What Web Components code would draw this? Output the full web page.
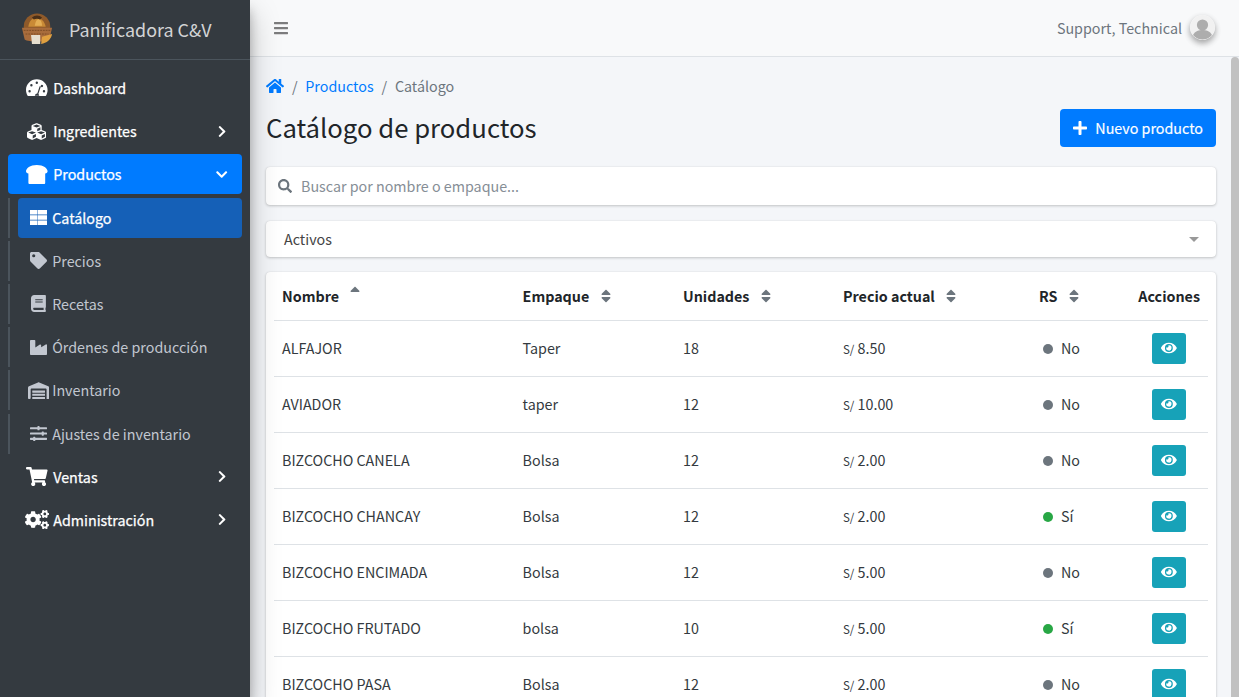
<!DOCTYPE html>
<html lang="es">
<head>
<meta charset="utf-8">
<title>Catálogo de productos</title>
<style>
  html, body { margin: 0; height: 100%; overflow: hidden; }
  body {
    font-family: "Noto Sans CJK SC", "Liberation Sans", sans-serif;
    font-size: 14.3px;
    line-height: 24px;
    color: #212529;
    background: #f4f6f9;
  }
</style>
</head>
<body>
<app-shell>
  <app-sidebar slot="sidebar">
    <nav-item icon="gauge" label="Dashboard"></nav-item>
    <nav-item icon="cubes" label="Ingredientes" caret="right"></nav-item>
    <nav-item icon="bread" label="Productos" caret="down" active></nav-item>
    <nav-item icon="list" label="Catálogo" sub current></nav-item>
    <nav-item icon="tag" label="Precios" sub></nav-item>
    <nav-item icon="book" label="Recetas" sub></nav-item>
    <nav-item icon="industry" label="Órdenes de producción" sub></nav-item>
    <nav-item icon="warehouse" label="Inventario" sub></nav-item>
    <nav-item icon="sliders" label="Ajustes de inventario" sub></nav-item>
    <nav-item icon="cart" label="Ventas" caret="right"></nav-item>
    <nav-item icon="cogs" label="Administración" caret="right"></nav-item>
  </app-sidebar>
  <app-navbar slot="navbar"></app-navbar>
  <page-head></page-head>
  <search-box></search-box>
  <status-select>Activos</status-select>
  <product-table></product-table>
</app-shell>

<script>
const icon = (w, d) => `<svg viewBox="0 0 ${w} 512" width="${w / 512}em" height="1em"><path fill="currentColor" d="${d}"/></svg>`;

const ICONS = {
  gauge: icon(576, "M288 32C129 32 0 161 0 320c0 53 14 102 39 144 6 10 16 16 28 16h442c12 0 22-6 28-16 25-42 39-91 39-144C576 161 447 32 288 32zm0 64a32 32 0 1 1 0 64 32 32 0 0 1 0-64zM96 384a32 32 0 1 1 0-64 32 32 0 0 1 0 64zm48-160a32 32 0 1 1 0-64 32 32 0 0 1 0 64zm247 18-61 184c14 12 22 30 22 50H236c0-36 29-64 64-64h1l61-184c3-8 12-13 20-10 9 3 13 12 10 20zm33 3a32 32 0 1 1 27-50 32 32 0 0 1-27 50zm56 139a32 32 0 1 1 0-64 32 32 0 0 1 0 64z"),
  cubes: icon(512, "M488.600 250.200L392 214V105.500c0-15-9.300-28.400-23.400-33.700l-100-37.500c-8.100-3.100-17.100-3.100-25.300 0l-100 37.500c-14.100 5.300-23.400 18.700-23.400 33.700V214l-96.600 36.200C9.300 255.500 0 268.900 0 283.900V394c0 13.600 7.700 26.100 19.900 32.200l100 50c10.100 5.100 22.100 5.100 32.200 0l103.900-52 103.900 52c10.100 5.100 22.100 5.100 32.200 0l100-50c12.200-6.100 19.900-18.600 19.900-32.200V283.900c0-15-9.300-28.400-23.400-33.700zM358 214.800l-85 31.900v-68.200l85-37v73.300zM154 104.100l102-38.200 102 38.200v.6l-102 41.400-102-41.400v-.6zm84 291.100l-85 42.500v-79.100l85-38.800v75.400zm0-112l-102 41.400-102-41.400v-.6l102-38.200 102 38.200v.6zm240 112l-85 42.500v-79.100l85-38.800v75.400zm0-112l-102 41.400-102-41.400v-.6l102-38.200 102 38.200v.6z"),
  bread: icon(576, "M288 0C108 0 0 93.400 0 169.140 0 199.440 24.240 224 64 224v256c0 17.670 16.120 32 36 32h376c19.880 0 36-14.330 36-32V224c39.760 0 64-24.560 64-54.860C576 93.400 468 0 288 0z"),
  list: icon(512, "M0 32h212v133H0zM226 32h286v133H226zM0 187h212v138H0zM226 187h286v138H226zM0 347h212v133H0zM226 347h286v133H226z"),
  tag: icon(512, "M0 252V48C0 21 21 0 48 0h204c13 0 25 5 34 14l212 212c19 19 19 49 0 68L294 498c-19 19-49 19-68 0L14 286C5 277 0 265 0 252zm112-188a48 48 0 1 0 0 96 48 48 0 0 0 0-96z"),
  book: icon(448, "M448 360V24c0-13-11-24-24-24H96C43 0 0 43 0 96v320c0 53 43 96 96 96h328c13 0 24-11 24-24v-16c0-8-4-14-9-19-4-15-4-58 0-71 5-5 9-12 9-22zM128 134c0-3 3-6 6-6h212c3 0 6 3 6 6v20c0 3-3 6-6 6H134c-3 0-6-3-6-6zm0 64c0-3 3-6 6-6h212c3 0 6 3 6 6v20c0 3-3 6-6 6H134c-3 0-6-3-6-6zm253 250H96c-18 0-32-14-32-32s14-32 32-32h285c-2 17-2 47 0 64z"),
  industry: icon(512, "M475 163 336 252v-65c0-19-21-30-37-20l-139 89V56c0-13-11-24-24-24H24C11 32 0 43 0 56v400c0 13 11 24 24 24h464c13 0 24-11 24-24V183c0-19-21-30-37-20z"),
  warehouse: icon(640, "M640 173v315c0 13-11 24-24 24h-56V224c0-18-14-32-32-32H112c-18 0-32 14-32 32v264c0 13-11 24-24 24H24c-13 0-24-11-24-24V173c0-20 12-37 30-45L302 15c11-5 24-5 36 0l272 113c18 8 30 25 30 45zM504 256H136c-4 0-8 4-8 8v48c0 4 4 8 8 8h368c4 0 8-4 8-8v-48c0-4-4-8-8-8zm0 96H136c-4 0-8 4-8 8v48c0 4 4 8 8 8h368c4 0 8-4 8-8v-48c0-4-4-8-8-8zm0 96H136c-4 0-8 4-8 8v48c0 4 4 8 8 8h368c4 0 8-4 8-8v-48c0-4-4-8-8-8z"),
  sliders: icon(512, "M496 384H160v-16c0-9-7-16-16-16h-32c-9 0-16 7-16 16v16H16c-9 0-16 7-16 16v32c0 9 7 16 16 16h80v16c0 9 7 16 16 16h32c9 0 16-7 16-16v-16h336c9 0 16-7 16-16v-32c0-9-7-16-16-16zm0-160h-80v-16c0-9-7-16-16-16h-32c-9 0-16 7-16 16v16H16c-9 0-16 7-16 16v32c0 9 7 16 16 16h336v16c0 9 7 16 16 16h32c9 0 16-7 16-16v-16h80c9 0 16-7 16-16v-32c0-9-7-16-16-16zm0-160H288V48c0-9-7-16-16-16h-32c-9 0-16 7-16 16v16H16C7 64 0 71 0 80v32c0 9 7 16 16 16h208v16c0 9 7 16 16 16h32c9 0 16-7 16-16v-16h208c9 0 16-7 16-16V80c0-9-7-16-16-16z"),
  cart: icon(576, "M528 301l47-208c4-15-8-29-23-29H159l-9-45C147 8 137 0 126 0H24C11 0 0 11 0 24v16c0 13 11 24 24 24h70l70 343c-17 10-28 28-28 49 0 31 25 56 56 56s56-25 56-56c0-16-6-30-17-40h210c-11 10-17 24-17 40 0 31 25 56 56 56s56-25 56-56c0-22-13-41-31-50l6-24c3-15-8-29-23-29H220l-7-32h292c11 0 21-8 23-19z"),
  cogs: icon(640, "M512.100 191l-8.200 14.300c-3 5.300-9.400 7.500-15.100 5.400-11.800-4.400-22.600-10.700-32.100-18.600-4.600-3.800-5.800-10.500-2.800-15.700l8.200-14.300c-6.900-8-12.300-17.300-15.900-27.400h-16.500c-6 0-11.200-4.300-12.200-10.300-2-12-2.100-24.600 0-37.100 1-6 6.200-10.400 12.200-10.400h16.500c3.600-10.100 9-19.400 15.900-27.400l-8.200-14.300c-3-5.200-1.900-11.900 2.800-15.700 9.500-7.900 20.400-14.200 32.100-18.600 5.700-2.100 12.100.1 15.100 5.400l8.200 14.300c10.500-1.900 21.200-1.900 31.700 0L552 6.300c3-5.300 9.400-7.500 15.100-5.400 11.800 4.400 22.600 10.700 32.100 18.600 4.600 3.800 5.800 10.500 2.800 15.700l-8.200 14.300c6.900 8 12.300 17.300 15.900 27.400h16.500c6 0 11.200 4.300 12.200 10.300 2 12 2.100 24.600 0 37.100-1 6-6.200 10.400-12.200 10.400h-16.500c-3.600 10.100-9 19.400-15.900 27.400l8.200 14.300c3 5.200 1.900 11.900-2.800 15.700-9.500 7.900-20.400 14.200-32.100 18.600-5.700 2.100-12.100-.1-15.100-5.400l-8.200-14.300c-10.400 1.900-21.200 1.900-31.700 0zm-10.500-58.800c38.500 29.600 82.400-14.300 52.800-52.800-38.500-29.700-82.400 14.300-52.800 52.800zM386.300 286.100l33.700 16.800c10.100 5.800 14.500 18.100 10.500 29.100-8.900 24.200-26.400 46.400-42.600 65.800-7.400 8.900-20.200 11.100-30.300 5.300l-29.100-16.800c-16 13.700-34.600 24.600-54.900 31.700v33.600c0 11.600-8.300 21.600-19.700 23.600-24.600 4.200-50.400 4.400-75.900 0-11.500-2-20-11.900-20-23.600V418c-20.300-7.200-38.900-18-54.900-31.700L74 403c-10 5.800-22.900 3.600-30.300-5.300-16.200-19.400-33.300-41.600-42.200-65.700-4-10.900.4-23.200 10.500-29.100l33.300-16.800c-3.900-20.900-3.900-42.400 0-63.400L12 205.800c-10.100-5.800-14.600-18.100-10.500-29 8.900-24.200 26-46.400 42.200-65.800 7.400-8.900 20.200-11.100 30.300-5.300l29.100 16.800c16-13.700 34.600-24.600 54.900-31.700V57.100c0-11.500 8.200-21.500 19.600-23.500 24.600-4.200 50.500-4.400 76-.1 11.500 2 20 11.900 20 23.600v33.600c20.300 7.200 38.900 18 54.900 31.700l29.100-16.800c10-5.800 22.900-3.600 30.300 5.300 16.200 19.400 33.200 41.600 42.100 65.800 4 10.900.1 23.200-10 29.100l-33.700 16.800c3.900 21 3.900 42.500 0 63.500zm-117.600 21.100c59.200-77-28.700-164.900-105.700-105.700-59.200 77 28.700 164.900 105.700 105.700zm243.400 182.700l-8.200 14.300c-3 5.300-9.400 7.500-15.100 5.400-11.800-4.400-22.600-10.700-32.100-18.600-4.600-3.800-5.800-10.500-2.800-15.700l8.200-14.300c-6.900-8-12.300-17.300-15.900-27.400h-16.500c-6 0-11.200-4.300-12.200-10.300-2-12-2.100-24.600 0-37.100 1-6 6.200-10.400 12.200-10.400h16.500c3.600-10.100 9-19.400 15.900-27.400l-8.200-14.300c-3-5.200-1.900-11.900 2.800-15.700 9.500-7.900 20.400-14.200 32.100-18.600 5.700-2.100 12.100.1 15.100 5.400l8.200 14.300c10.500-1.900 21.200-1.900 31.700 0l8.200-14.300c3-5.300 9.400-7.500 15.100-5.400 11.800 4.400 22.600 10.700 32.100 18.600 4.600 3.800 5.800 10.500 2.800 15.700l-8.200 14.300c6.900 8 12.300 17.300 15.900 27.400h16.500c6 0 11.200 4.300 12.200 10.300 2 12 2.100 24.600 0 37.100-1 6-6.200 10.400-12.200 10.400h-16.500c-3.600 10.100-9 19.400-15.900 27.400l8.200 14.300c3 5.200 1.900 11.900-2.800 15.700-9.500 7.900-20.400 14.200-32.100 18.600-5.700 2.100-12.100-.1-15.100-5.400l-8.200-14.300c-10.400 1.900-21.200 1.900-31.700 0zM501.600 431c38.500 29.600 82.400-14.300 52.800-52.800-38.500-29.600-82.400 14.300-52.800 52.800z"),
  chevRight: icon(320, "M285 273 91 467c-9 9-25 9-34 0l-23-23c-9-9-9-24 0-34l154-154L34 102c-9-10-9-25 0-34l23-23c9-9 25-9 34 0l194 194c10 9 10 25 0 34z"),
  chevDown: icon(448, "M207 381 13 187c-9-9-9-25 0-34l23-23c9-9 24-9 34 0l154 154 154-154c10-9 25-9 34 0l23 23c9 9 9 25 0 34L241 381c-9 10-25 10-34 0z"),
  home: icon(576, "M280 148 96 300v164c0 9 7 16 16 16l112-1c9 0 16-7 16-16v-95c0-9 7-16 16-16h64c9 0 16 7 16 16v95c0 9 7 16 16 16l112 1c9 0 16-7 16-16V300L296 148c-5-4-11-4-16 0zm292 103-84-69V44c0-7-5-12-12-12h-56c-7 0-12 5-12 12v73l-89-74c-18-14-44-14-62 0L4 251c-5 4-6 12-2 17l26 31c4 5 12 6 17 2L280 107c5-4 11-4 16 0l235 194c5 4 13 3 17-2l26-31c4-5 3-13-2-17z"),
  bars: icon(448, "M16 132h416c9 0 16-7 16-16V76c0-9-7-16-16-16H16C7 60 0 67 0 76v40c0 9 7 16 16 16zm0 160h416c9 0 16-7 16-16v-40c0-9-7-16-16-16H16c-9 0-16 7-16 16v40c0 9 7 16 16 16zm0 160h416c9 0 16-7 16-16v-40c0-9-7-16-16-16H16c-9 0-16 7-16 16v40c0 9 7 16 16 16z"),
  plus: icon(448, "M416 208H272V64c0-18-14-32-32-32h-32c-18 0-32 14-32 32v144H32c-18 0-32 14-32 32v32c0 18 14 32 32 32h144v144c0 18 14 32 32 32h32c18 0 32-14 32-32V304h144c18 0 32-14 32-32v-32c0-18-14-32-32-32z"),
  search: icon(512, "M505 443 405 343c-4-4-10-7-17-7h-16c28-35 44-80 44-128C416 93 323 0 208 0S0 93 0 208s93 208 208 208c48 0 93-16 128-44v16c0 7 3 13 7 17l100 100c9 9 24 9 34 0l28-28c9-10 9-25 0-34zM208 336a128 128 0 1 1 0-256 128 128 0 0 1 0 256z"),
  eye: icon(576, "M572 241C518 135 410 64 288 64S58 135 3 241a32 32 0 0 0 0 30c55 106 163 177 285 177s230-71 285-177a32 32 0 0 0-1-30zM288 400a144 144 0 1 1 0-288 144 144 0 0 1 0 288zm0-240a95 95 0 0 0-25 4 48 48 0 0 1-67 67 96 96 0 1 0 92-71z"),
  sortBoth: icon(320, "M41 288h238c21 0 32 26 17 41L177 448c-9 9-25 9-34 0L24 329c-15-15-4-41 17-41zm255-105L177 64c-9-9-25-9-34 0L24 183c-15 15-4 41 17 41h238c21 0 32-26 17-41z"),
  sortUp: icon(320, "M279 224H41c-21 0-32-26-17-41L143 64c9-9 25-9 34 0l119 119c15 15 4 41-17 41z")
};

class AppShell extends HTMLElement {
  constructor() {
    super();
    this.attachShadow({ mode: "open" }).innerHTML = `
      <style>
        :host { display: grid; grid-template-columns: 250px 1fr; height: 697px; }
        .side { position: relative; z-index: 2; box-shadow: 0 14px 28px rgba(0,0,0,.25), 0 10px 10px rgba(0,0,0,.22); display: flex; }
        .right { position: relative; display: flex; flex-direction: column; min-width: 0; height: 697px; }
        main { flex: 1; overflow: hidden; padding: 17px 23px 0 16px; min-height: 0; display: flex; flex-direction: column; }
        .thumb { position: absolute; right: 0; top: 57px; bottom: 0; width: 8px; background: #c1c1c1; border-radius: 4px 4px 0 0; }
      </style>
      <div class="side"><slot name="sidebar"></slot></div>
      <div class="right">
        <slot name="navbar"></slot>
        <main><slot></slot></main>
        <div class="thumb"></div>
      </div>`;
  }
}

class AppSidebar extends HTMLElement {
  constructor() {
    super();
    this.attachShadow({ mode: "open" }).innerHTML = `
      <style>
        :host { display: block; width: 250px; background: #343a40; }
        .brand { display: flex; align-items: center; height: 60px; border-bottom: 1px solid #4b545c; padding-left: 21px; box-sizing: border-box; }
        .brand svg { width: 32px; height: 32px; flex: none; margin-top: -1px; }
        .brand span { margin: -2px 0 0 16px; font-size: 17.9px; line-height: 30px; color: rgba(255,255,255,.8); }
        nav { display: flex; flex-direction: column; padding: 8px 8px 0; }
      </style>
      <div class="brand">
        <svg viewBox="0 0 35 35">
          <circle cx="17.5" cy="15" r="14.500" fill="#8f5a2a"/>
          <path d="M8 15c1-7 5-10 9-10s9 4 10 10z" fill="#c98a36"/>
          <path d="M15 14c1-6 3-8 5-7s3 3 3 7z" fill="#e3ae55"/>
          <path d="M12 5c3-3 8-3 11 0l-2 2c-2-1-5-1-7 0z" fill="#4a2f18"/>
          <path d="M1 16h33l-3 13c-3 3-23 3-27 0z" fill="#a86c3c"/>
          <path d="M3 19h29M5 23h25" stroke="#7b4a24" stroke-width="1" stroke-dasharray="2 1"/>
          <path d="M11 24h10v10H12z" fill="#e7dfcf"/>
          <path d="M23 26l11-3c-1 6-6 10-12 11z" fill="#e0a040"/>
        </svg>
        <span>Panificadora C&amp;V</span>
      </div>
      <nav><slot></slot></nav>`;
  }
}

class NavItem extends HTMLElement {
  constructor() {
    super();
    const caret = this.getAttribute("caret");
    const chev = caret ? `<i class="caret">${caret === "down" ? ICONS.chevDown : ICONS.chevRight}</i>` : "";
    this.attachShadow({ mode: "open" }).innerHTML = `
      <style>
        :host { display: block; position: relative; margin-bottom: 3.2px; }
        a { display: flex; align-items: center; height: 40px; border-radius: 4px; padding: 0 14px 0 16px; box-sizing: border-box; color: #fff; -webkit-text-stroke: .25px currentColor; }
        .ico { width: 25.6px; height: 24px; display: flex; align-items: center; justify-content: center; flex: none; margin-right: 3.600px; font-size: 19.2px; }
        .ico svg { flex: none; }
        span { white-space: nowrap; }
        .caret { margin-left: auto; width: 12px; display: flex; justify-content: center; font-size: 13px; }
        :host([active]) a { background: #007bff; }
        :host([sub]) { margin-left: 10px; }
        :host([sub]) a { color: #c2c7d0; padding-left: 8px; -webkit-text-stroke: 0; }
        :host([sub]) .ico { font-size: 17px; margin-right: .6px; }
        :host([sub])::before { content: ""; position: absolute; left: -10px; top: 0; bottom: 0; width: 2px; background: #4b545c; }
        :host([current]) a { background: #1560b7; color: #fff; -webkit-text-stroke: .25px currentColor; }
      </style>
      <a><i class="ico">${ICONS[this.getAttribute("icon")]}</i><span>${this.getAttribute("label")}</span>${chev}</a>`;
  }
}

class AppNavbar extends HTMLElement {
  constructor() {
    super();
    this.attachShadow({ mode: "open" }).innerHTML = `
      <style>
        :host { display: flex; align-items: center; justify-content: space-between; flex: none; height: 57px; box-sizing: border-box; background: #f8f9fa; border-bottom: 1px solid #dee2e6; padding: 0 24px; color: #6c757d; }
        .bars { color: rgba(0,0,0,.5); display: flex; font-size: 16px; }
        .user { display: flex; align-items: center; gap: 8px; }
        .avatar { width: 25px; height: 25px; border-radius: 50%; box-shadow: 0 3px 6px rgba(0,0,0,.16), 0 3px 6px rgba(0,0,0,.23); display: block; margin-top: -2px; }
      </style>
      <i class="bars">${ICONS.bars}</i>
      <div class="user"><span>Support, Technical</span>
        <svg class="avatar" viewBox="0 0 25 25">
          <circle cx="12.5" cy="12.5" r="12.5" fill="#f1f1f1"/>
          <circle cx="12.5" cy="10" r="5.6" fill="#adadad"/>
          <path d="M3 20c2-4 6-5 9.500-5s7.500 1 9.500 5c-5 6-14 6-19 0z" fill="#adadad"/>
        </svg>
      </div>`;
  }
}

class PageHead extends HTMLElement {
  constructor() {
    super();
    this.attachShadow({ mode: "open" }).innerHTML = `
      <style>
        :host { display: block; flex: none; }
        .crumbs { display: flex; align-items: center; height: 24px; margin-bottom: 11px; color: #6c757d; }
        .crumbs .home { color: #007bff; display: flex; font-size: 16px; }
        .crumbs a { color: #007bff; }
        .crumbs b { font-weight: 400; padding: 0 7.700px 0 8px; }
        .row { display: flex; justify-content: space-between; align-items: center; margin-bottom: 20px; }
        h1 { margin: 0 0 2px; font-size: 25.7px; line-height: 36px; font-weight: 400; }
        button { display: flex; align-items: center; gap: 8px; height: 38px; padding: 0 13px; border: 0; border-radius: 4px; background: #007bff; color: #fff; font: inherit; -webkit-text-stroke: .15px #fff; }
        button i { display: flex; font-size: 16px; }
      </style>
      <div class="crumbs"><i class="home">${ICONS.home}</i><b>/</b><a>Productos</a><b>/</b><span>Catálogo</span></div>
      <div class="row"><h1>Catálogo de productos</h1><button><i>${ICONS.plus}</i>Nuevo producto</button></div>`;
  }
}

class SearchBox extends HTMLElement {
  constructor() {
    super();
    this.attachShadow({ mode: "open" }).innerHTML = `
      <style>
        :host { display: flex; flex: none; align-items: center; height: 38px; box-sizing: border-box; background: #fff; border-radius: 4px; box-shadow: 0 0 1px rgba(0,0,0,.125), 0 1px 3px rgba(0,0,0,.2); padding-left: 12px; margin-bottom: 16px; color: #6c757d; }
        i { display: flex; font-size: 14px; margin-right: 9px; }
        span { color: #868e96; }
      </style>
      <i>${ICONS.search}</i><span>Buscar por nombre o empaque...</span>`;
  }
}

class StatusSelect extends HTMLElement {
  constructor() {
    super();
    this.attachShadow({ mode: "open" }).innerHTML = `
      <style>
        :host { display: flex; flex: none; align-items: center; justify-content: space-between; height: 36px; box-sizing: border-box; background: #fff; border-radius: 4px; box-shadow: 0 0 1px rgba(0,0,0,.125), 0 1px 3px rgba(0,0,0,.2); padding: 0 18px; margin-bottom: 15px; color: #444; }
        .arrow { width: 0; height: 0; border-left: 5px solid transparent; border-right: 5px solid transparent; border-top: 5px solid #999; margin-right: -1px; }
      </style>
      <slot></slot><i class="arrow"></i>`;
  }
}

const PRODUCTS = [
  ["ALFAJOR", "Taper", 18, "8.50", false],
  ["AVIADOR", "taper", 12, "10.00", false],
  ["BIZCOCHO CANELA", "Bolsa", 12, "2.00", false],
  ["BIZCOCHO CHANCAY", "Bolsa", 12, "2.00", true],
  ["BIZCOCHO ENCIMADA", "Bolsa", 12, "5.00", false],
  ["BIZCOCHO FRUTADO", "bolsa", 10, "5.00", true],
  ["BIZCOCHO PASA", "Bolsa", 12, "2.00", false]
];

class ProductTable extends HTMLElement {
  constructor() {
    super();
    const sort = (name) => `<i class="sort ${name === "sortUp" ? "up" : ""}">${ICONS[name]}</i>`;
    const rows = PRODUCTS.map(([name, pack, units, price, rs]) => `
      <tr>
        <td>${name}</td><td>${pack}</td><td>${units}</td>
        <td><small>S/</small> ${price}</td>
        <td class="rs"><i class="dot ${rs ? "on" : ""}"></i>${rs ? "Sí" : "No"}</td>
        <td class="act"><button>${ICONS.eye}</button></td>
      </tr>`).join("");
    this.attachShadow({ mode: "open" }).innerHTML = `
      <style>
        :host { display: block; flex: none; background: #fff; border-radius: 4px 4px 0 0; box-shadow: 0 0 1px rgba(0,0,0,.125), 0 1px 3px rgba(0,0,0,.2); padding: 0 8px; height: 480px; overflow: hidden; }
        table { width: 100%; border-collapse: collapse; table-layout: fixed; color: #343a40; }
        th { height: 48px; box-sizing: border-box; padding: 1px 8px 0; text-align: left; font-weight: 700; color: #212529; border-bottom: 1px solid #dee2e6; white-space: nowrap; }
        td { height: 56px; box-sizing: border-box; padding: 0 8px; border-bottom: 1px solid #dee2e6; }
        .sort { display: inline-block; width: 10px; height: 16px; font-size: 16px; color: #6c757d; margin-left: 8px; vertical-align: -2px; }
        .sort.up { vertical-align: 1px; }
        .sort svg { display: block; }
        small { font-size: 11.5px; }
        .rs { padding-left: 16px; }
        .dot { display: inline-block; width: 10px; height: 10px; border-radius: 50%; background: #6c757d; margin: 0 8px 0 4px; }
        .dot.on { background: #28a745; }
        th.acc { text-align: right; }
        .act { text-align: right; padding-right: 22px; }
        button { width: 34px; height: 31px; border: 0; border-radius: 3px; background: #17a2b8; color: #fff; padding: 0 9px; vertical-align: middle; font-size: 14px; }
        button svg { display: block; }
      </style>
      <table>
        <colgroup><col style="width:240.600px"><col style="width:160.400px"><col style="width:160px"><col style="width:188px"><col style="width:90px"><col></colgroup>
        <thead><tr>
          <th>Nombre ${sort("sortUp")}</th><th>Empaque ${sort("sortBoth")}</th><th>Unidades ${sort("sortBoth")}</th>
          <th>Precio actual ${sort("sortBoth")}</th><th class="rs">RS ${sort("sortBoth")}</th><th class="acc">Acciones</th>
        </tr></thead>
        <tbody>${rows}</tbody>
      </table>`;
  }
}

customElements.define("nav-item", NavItem);
customElements.define("app-sidebar", AppSidebar);
customElements.define("app-navbar", AppNavbar);
customElements.define("page-head", PageHead);
customElements.define("search-box", SearchBox);
customElements.define("status-select", StatusSelect);
customElements.define("product-table", ProductTable);
customElements.define("app-shell", AppShell);
</script>
</body>
</html>
